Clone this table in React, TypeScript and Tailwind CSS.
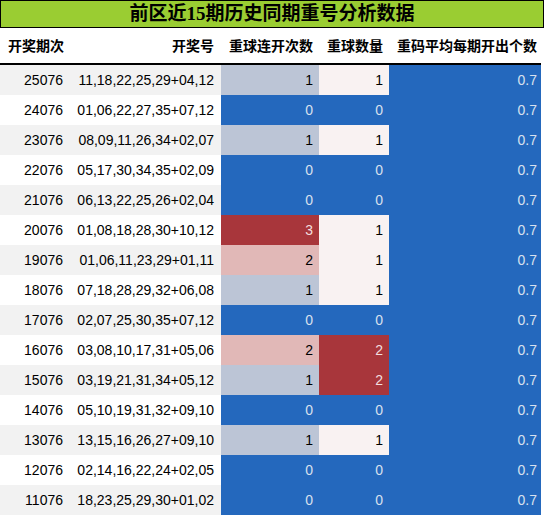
import React from 'react';

type Row = { issue: string; nums: string; streak: number; count: number };

const rows: Row[] = [
  { issue: '25076', nums: '11,18,22,25,29+04,12', streak: 1, count: 1 },
  { issue: '24076', nums: '01,06,22,27,35+07,12', streak: 0, count: 0 },
  { issue: '23076', nums: '08,09,11,26,34+02,07', streak: 1, count: 1 },
  { issue: '22076', nums: '05,17,30,34,35+02,09', streak: 0, count: 0 },
  { issue: '21076', nums: '06,13,22,25,26+02,04', streak: 0, count: 0 },
  { issue: '20076', nums: '01,08,18,28,30+10,12', streak: 3, count: 1 },
  { issue: '19076', nums: '01,06,11,23,29+01,11', streak: 2, count: 1 },
  { issue: '18076', nums: '07,18,28,29,32+06,08', streak: 1, count: 1 },
  { issue: '17076', nums: '02,07,25,30,35+07,12', streak: 0, count: 0 },
  { issue: '16076', nums: '03,08,10,17,31+05,06', streak: 2, count: 2 },
  { issue: '15076', nums: '03,19,21,31,34+05,12', streak: 1, count: 2 },
  { issue: '14076', nums: '05,10,19,31,32+09,10', streak: 0, count: 0 },
  { issue: '13076', nums: '13,15,16,26,27+09,10', streak: 1, count: 1 },
  { issue: '12076', nums: '02,14,16,22,24+02,05', streak: 0, count: 0 },
  { issue: '11076', nums: '18,23,25,29,30+01,02', streak: 0, count: 0 },
];

const streakColor: Record<number, string> = {
  0: 'bg-[#2468bd] text-[#d8e0ee]',
  1: 'bg-[#bcc5d6] text-black',
  2: 'bg-[#e1b8b7] text-black',
  3: 'bg-[#a8363b] text-[#f3dede]',
};

const countColor: Record<number, string> = {
  0: 'bg-[#2468bd] text-[#d8e0ee]',
  1: 'bg-[#f9f2f2] text-black',
  2: 'bg-[#a8363b] text-[#f3dede]',
};

const grid = 'grid grid-cols-[70px_151px_98px_70px_152px] w-[541px]';

export default function App() {
  return (
    <div className="w-[544px] h-[516px] bg-white overflow-hidden">
      <div
        className="h-[28px] border border-black bg-[#9acd32] flex items-center justify-center text-[19px] font-bold text-black"
        style={{ fontFamily: '"Liberation Serif", "Noto Sans CJK SC", serif' }}
      >
        前区近15期历史同期重号分析数据
      </div>
      <div
        className={`${grid} h-[37px] border-b-2 border-black items-center text-[14px] font-bold text-black`}
        style={{ fontFamily: '"Noto Sans CJK SC", sans-serif' }}
      >
        <div className="pl-[8px]">开奖期次</div>
        <div className="text-right pr-[7px]">开奖号</div>
        <div className="text-right pr-[6px]">重球连开次数</div>
        <div className="text-right pr-[6px]">重球数量</div>
        <div className="text-right pr-[4px]">重码平均每期开出个数</div>
      </div>
      <div style={{ fontFamily: '"Liberation Sans", Arial, sans-serif' }} className="text-[14px]">
        {rows.map((r, i) => (
          <div key={r.issue} className={`${grid} h-[30px]`}>
            <div className={`flex items-center justify-end pr-[7px] text-black ${i % 2 === 0 ? 'bg-[#f2f2f2]' : 'bg-white'}`}>
              {r.issue}
            </div>
            <div className={`flex items-center justify-end pr-[7px] text-black ${i % 2 === 0 ? 'bg-[#f2f2f2]' : 'bg-white'}`}>
              {r.nums}
            </div>
            <div className={`flex items-center justify-end pr-[6px] ${streakColor[r.streak]}`}>{r.streak}</div>
            <div className={`flex items-center justify-end pr-[6px] ${countColor[r.count]}`}>{r.count}</div>
            <div className="flex items-center justify-end pr-[4px] bg-[#2468bd] text-[#d8e0ee]">0.7</div>
          </div>
        ))}
      </div>
    </div>
  );
}
